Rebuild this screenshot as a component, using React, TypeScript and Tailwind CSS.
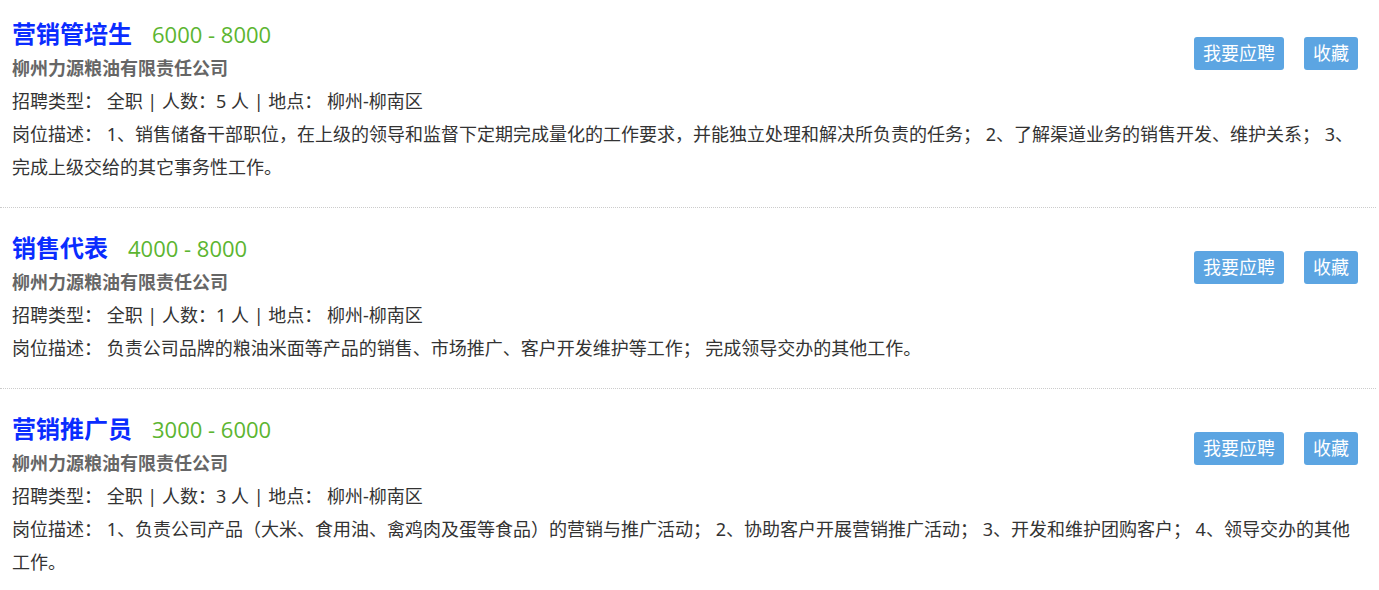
import React from "react";

type Job = {
  title: string;
  salary: string;
  count: string;
  desc: string;
};

const jobs: Job[] = [
  {
    title: "营销管培生",
    salary: "6000 - 8000",
    count: "5",
    desc: "1、销售储备干部职位，在上级的领导和监督下定期完成量化的工作要求，并能独立处理和解决所负责的任务； 2、了解渠道业务的销售开发、维护关系； 3、完成上级交给的其它事务性工作。",
  },
  {
    title: "销售代表",
    salary: "4000 - 8000",
    count: "1",
    desc: "负责公司品牌的粮油米面等产品的销售、市场推广、客户开发维护等工作； 完成领导交办的其他工作。",
  },
  {
    title: "营销推广员",
    salary: "3000 - 6000",
    count: "3",
    desc: "1、负责公司产品（大米、食用油、禽鸡肉及蛋等食品）的营销与推广活动； 2、协助客户开展营销推广活动； 3、开发和维护团购客户； 4、领导交办的其他工作。",
  },
];

const font = {
  fontFamily: '"Noto Sans", "Noto Sans CJK SC", sans-serif',
};

export default function App() {
  return (
    <div className="w-[1379px] bg-white" style={font}>
      <ul className="w-[1376px]">
        {jobs.map((job, i) => (
          <li
            key={job.title}
            className={`border-b border-dotted border-[#cccccc] pl-3 pr-[18px] pb-[23px] ${
              i === 0 ? "pt-4" : "pt-[22px]"
            }`}
          >
            <div className="float-right mt-[21px] flex gap-5">
              <button className="h-[33px] rounded-[3px] bg-[#5ca5e2] px-[9px] text-[18px] leading-[33px] text-white">
                我要应聘
              </button>
              <button className="h-[33px] rounded-[3px] bg-[#5ca5e2] px-[9px] text-[18px] leading-[33px] text-white">
                收藏
              </button>
            </div>
            <div className="flex h-9 items-center">
              <span className="text-[24px] font-bold text-[#0a2cff]">{job.title}</span>
              <span
                className="ml-[20px] text-[22px] text-[#5cb531]"
                style={{ fontFamily: '"Open Sans", sans-serif' }}
              >
                {job.salary}
              </span>
            </div>
            <div className="text-[18px] font-bold leading-[33px] text-[#666666]">
              柳州力源粮油有限责任公司
            </div>
            <div className="text-[18px] leading-[33px] text-[#333333]">
              招聘类型：&nbsp;全职 | 人数：{job.count} 人 | 地点：&nbsp;柳州-柳南区
            </div>
            <div className="text-[18px] leading-[33px] text-[#333333]">
              岗位描述：&nbsp;{job.desc}
            </div>
          </li>
        ))}
      </ul>
    </div>
  );
}
